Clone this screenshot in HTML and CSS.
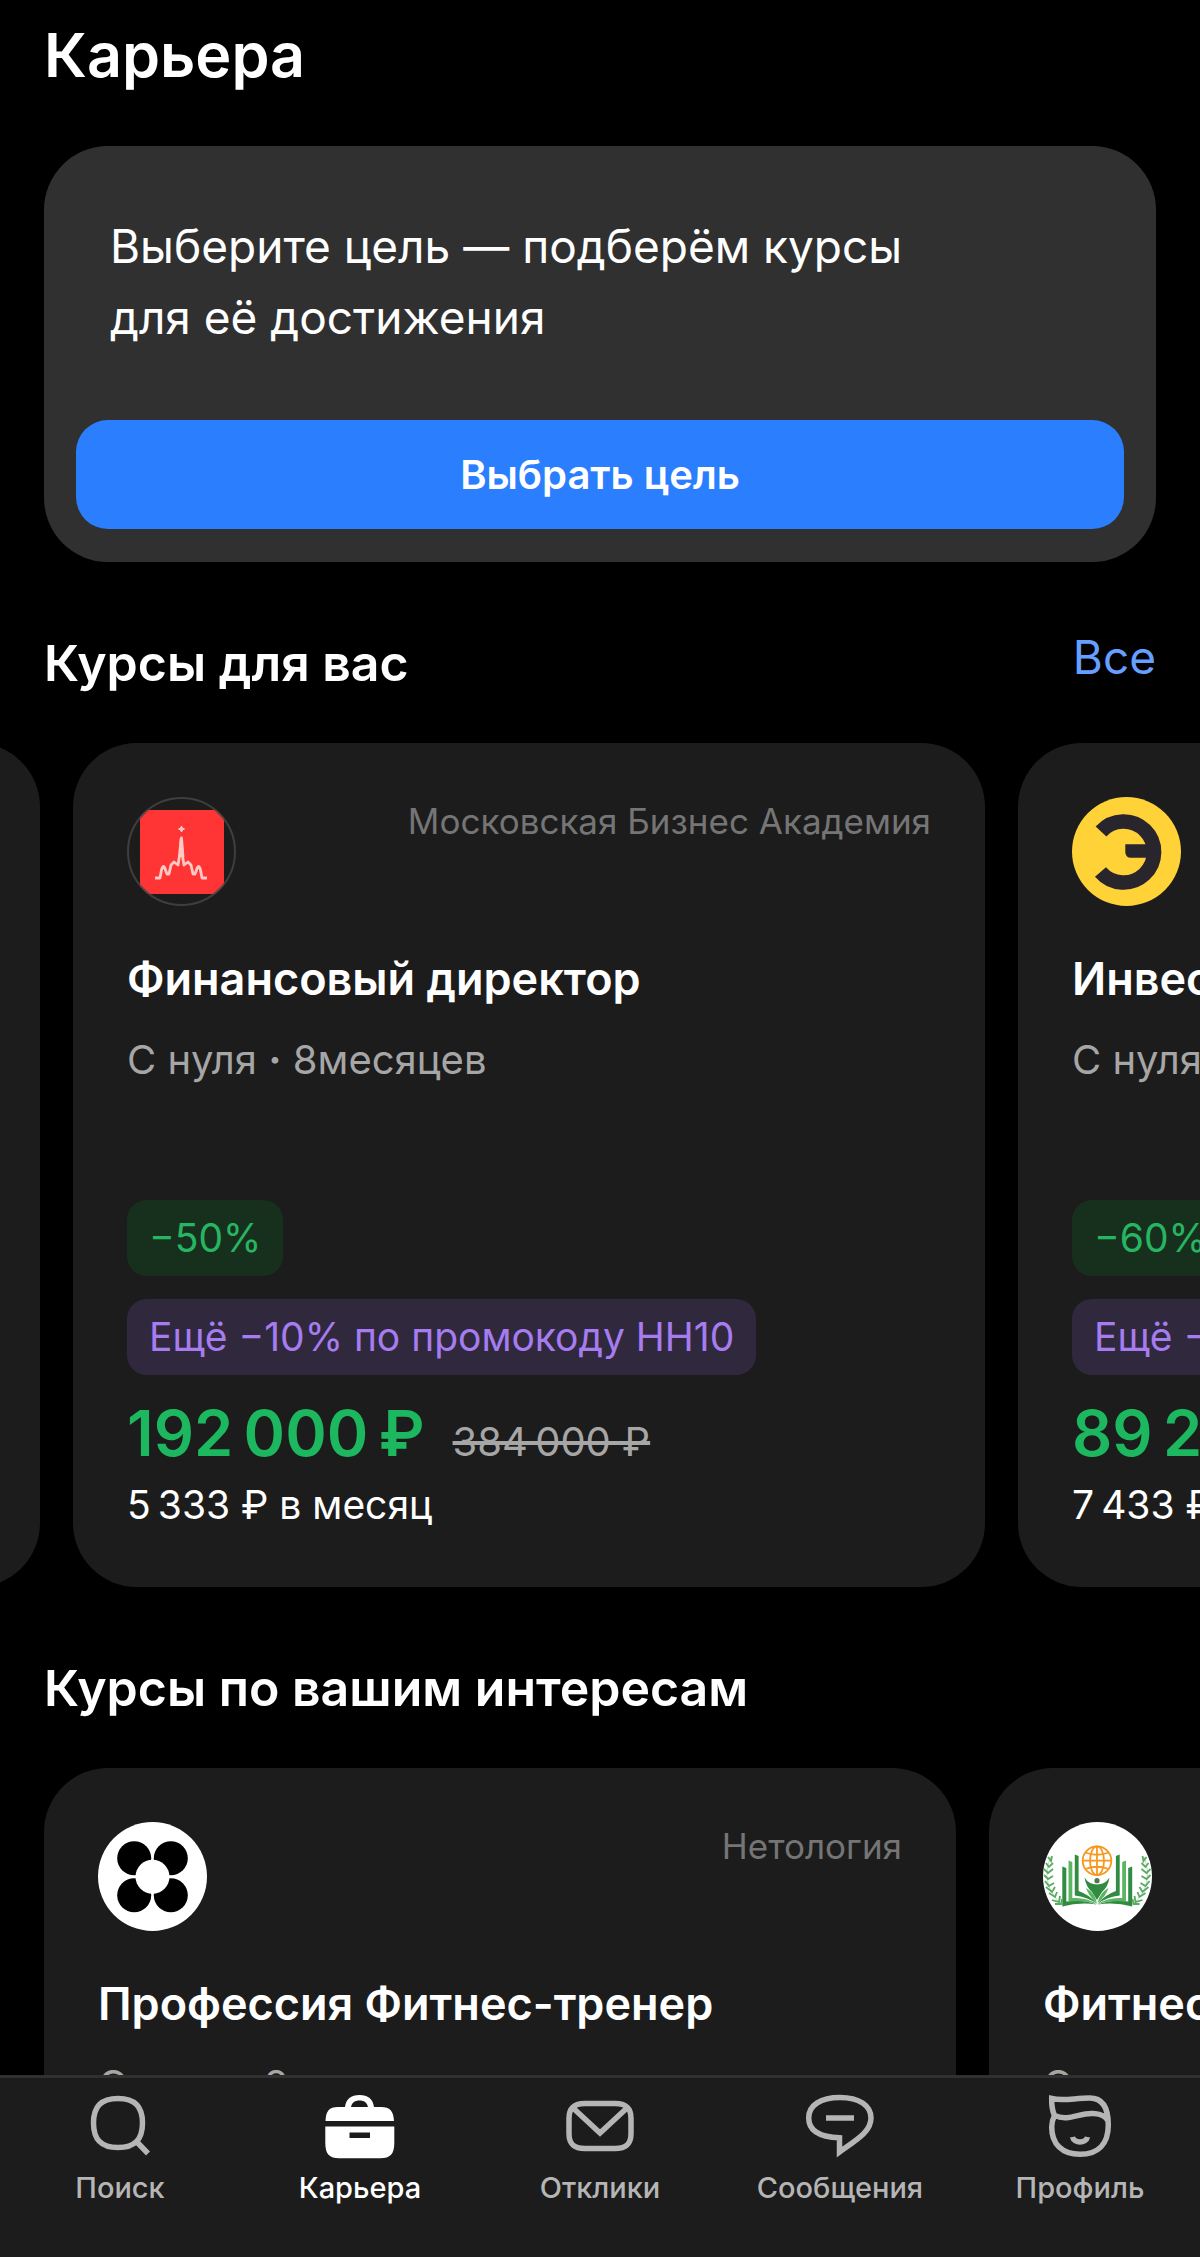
FILE: index.html
```html
<!DOCTYPE html>
<html lang="ru">

<head>
  <meta charset="UTF-8">
  <meta name="viewport" content="width=device-width, initial-scale=1.0">
  <title>Карьера</title>
  <link rel="stylesheet" href="styles.css">
</head>

<body>
  <main class="content">
    <h1 class="page-title">Карьера</h1>

    <section class="goal">
      <p class="goal-text">Выберите цель — подберём курсы<br>для её достижения</p>
      <button class="goal-button" type="button">Выбрать цель</button>
    </section>

    <section>
      <div class="section-head">
        <h2>Курсы для вас</h2>
        <a class="all-link" href="#">Все</a>
      </div>
      <div class="carousel carousel-scrolled">
        <div class="course"></div>
        <article class="course">
          <div class="course-top">
            <svg class="logo" viewBox="0 0 109 109">
              <clipPath id="round"><circle cx="54.5" cy="54.5" r="54" /></clipPath>
              <rect x="13" y="13" width="84" height="84" fill="#ff3535" clip-path="url(#round)" />
              <circle cx="54.5" cy="54.5" r="53.5" fill="none" stroke="#474747" stroke-opacity=".8" stroke-width="2" />
              <g fill="none" stroke="#ffc9c4" stroke-width="2.8" stroke-linejoin="round">
                <path d="M28 81h5l1.500-8q2-7 4 0l1.500 4h2l2-9 3-3 4 3 1.500-9 1.500-17 1.500 17 1.500 9 4-3 3 3 2 9h2l1.500-4q2-7 4 0l1.500 8h5" />
                <path d="M53 60l1.500-19 1.500 19" />
              </g>
              <path d="M54.500 29l1 2 2 1-2 1-1 2-1-2-2-1 2-1z" fill="#ffc9c4" stroke="#ffc9c4" />
            </svg>
            <span class="provider">Московская Бизнес Академия</span>
          </div>
          <h3 class="course-title">Финансовый директор</h3>
          <p class="course-meta">С нуля <b>·</b> 8месяцев</p>
          <div class="offer">
            <span class="badge badge-green">−50%</span>
            <span class="badge badge-purple">Ещё −10% по промокоду HH10</span>
            <div class="prices">
              <span class="price">192&thinsp;000&thinsp;₽</span>
              <s class="old-price">384&thinsp;000&nbsp;₽</s>
            </div>
            <p class="monthly">5&thinsp;333&nbsp;₽ в месяц</p>
          </div>
        </article>
        <article class="course">
          <div class="course-top">
            <svg class="logo" viewBox="0 0 109 109">
              <circle cx="54.5" cy="54.5" r="54.5" fill="#ffd238" />
              <path d="M29 34.500a30.500 30.500 0 1 1-.500 40.500" fill="none" stroke="#29252d" stroke-width="14.600" />
              <path d="M53.300 47.300H76v13.400H59q-5.700 0-5.700-6z" fill="#29252d" />
            </svg>
          </div>
          <h3 class="course-title">Инвестиционный аналитик</h3>
          <p class="course-meta">С нуля <b>·</b> 12 месяцев</p>
          <div class="offer">
            <span class="badge badge-green">−60%</span>
            <span class="badge badge-purple">Ещё −10% по промокоду HH10</span>
            <div class="prices">
              <span class="price">89&thinsp;200&thinsp;₽</span>
            </div>
            <p class="monthly">7&thinsp;433&nbsp;₽ в месяц</p>
          </div>
        </article>
      </div>
    </section>

    <section>
      <div class="section-head">
        <h2>Курсы по вашим интересам</h2>
      </div>
      <div class="carousel">
        <article class="course">
          <div class="course-top">
            <svg class="logo" viewBox="0 0 109 109">
              <circle cx="54.5" cy="54.5" r="54.5" fill="#fff" />
              <circle cx="36.2" cy="36.2" r="17" />
              <circle cx="72.8" cy="36.2" r="17" />
              <circle cx="36.2" cy="73.2" r="17" />
              <circle cx="72.8" cy="73.2" r="17" />
              <circle cx="54.5" cy="54.7" r="17" fill="#fff" />
            </svg>
            <span class="provider">Нетология</span>
          </div>
          <h3 class="course-title">Профессия Фитнес-тренер</h3>
          <p class="course-meta">С нуля <b>·</b> 8 месяцев</p>
        </article>
        <article class="course">
          <div class="course-top">
            <svg class="logo" viewBox="0 0 109 109">
              <circle cx="54.5" cy="54.5" r="54.5" fill="#fff" />
              <g fill="none" stroke="#f7981f" stroke-width="1.8">
                <circle cx="54" cy="38.700" r="14.300" />
                <ellipse cx="54" cy="38.700" rx="7" ry="14.300" />
                <path d="M54 24.400v28.600M39.700 38.700h28.600M42.500 30.500q11.500 4.500 23 0M42.500 47q11.500-4.500 23 0" />
              </g>
              <g id="half">
                <path d="M19.300 44.500l4 1.500v33.500q16.700-2.500 30.700 3-18-2.500-34.700 2z" fill="#318c42" />
                <path d="M25.500 38.500l3.800 1.500v36q13.700-1 24.700 6-14-4.500-28.500-2.500z" fill="#5cb562" />
                <path d="M31.800 32.500l3.800 1.500v35q11.400 4 18.400 13-10-7.500-22.200-8.500z" fill="#318c42" />
                <path d="M43 66q9 5 11 15-8-6-11-15z" fill="#5cb562" />
                <path d="M7.500 35Q-3 62 18 82" fill="none" stroke="#a8d3ab" stroke-width=".8" />
                <path d="M5 35l3 4 1-5M3 41l3 4 4-4M1 47l4 4 5-4M1 53l4 4 5-3M2 59l4 5 5-3M3 65l6 5 3-5M6 71l6 4 2-5M9 78l7 2 1-6M12 82l6 0 1-5" fill="none" stroke="#58ab60" stroke-width="1.800" />
              </g>
              <use href="#half" transform="translate(108.500 0) scale(-1 1)" />
              <circle cx="54" cy="58.700" r="2.600" fill="#4c7a4c" />
              <path d="M41.500 55.500q4.500 7 12.500 7t12.500-7q-1.500 9.500-7.500 14.500l-5 8-5-8q-6-5-7.500-14.500z" fill="#318c42" />
            </svg>
          </div>
          <h3 class="course-title">Фитнес-тренер</h3>
          <p class="course-meta">С нуля</p>
        </article>
      </div>
    </section>
  </main>

  <nav class="tabbar">
    <a class="tab" href="#">
      <svg class="tab-icon" viewBox="0 0 72 72">
        <path d="M34 8.500c17 0 24.500 8 24.500 24.500S51 57.500 34 57.500 9.500 49.500 9.500 33 17 8.500 34 8.500zM51 50l13 13.500" />
      </svg>
      <span>Поиск</span>
    </a>
    <a class="tab tab-active" href="#">
      <svg class="tab-icon" viewBox="0 0 72 72">
        <path class="solid" fill-rule="evenodd" d="M21 17C22 9 27 5 35.500 5S49 9 50 17h7c9 0 12.500 4 13 14H1.500C2 21 5 17 14 17zM27 17h17c-1-4.500-4-6.500-8.500-6.500S28 12.500 27 17z" />
        <path class="solid" fill-rule="evenodd" d="M1.300 36.500h69V53c0 11-4 15.300-14 15.300h-41C5.300 68.300 1.300 64 1.300 53zM25.500 42.500V48H46v-5.500z" />
      </svg>
      <span>Карьера</span>
    </a>
    <a class="tab" href="#">
      <svg class="tab-icon" viewBox="0 0 72 72">
        <path d="M21 13.500h30c12 0 16 5 16 15v15c0 10-4 15-16 15H21c-12 0-16-5-16-15v-15c0-10 4-15 16-15zM8.500 17.500L36 43l27.500-25.500" />
      </svg>
      <span>Отклики</span>
    </a>
    <a class="tab" href="#">
      <svg class="tab-icon" viewBox="0 0 72 72">
        <path d="M36 7.500c19 0 31 8 31 20.500 0 14-15 22-31.500 34V47.800C15 47 4.700 40 4.700 28 4.700 15 17 7.500 36 7.500zM22 28h28" />
      </svg>
      <span>Сообщения</span>
    </a>
    <a class="tab" href="#">
      <svg class="tab-icon" viewBox="0 0 72 72">
        <path d="M10.500 25.500C8 20 7.500 15 7.700 8.500c11 3 23-.500 38-.500C58 8 64.300 17 64.300 35 64.300 54 54 64.300 36 64.300S7.700 54 7.700 37c0-5 1-8 2.800-11.500C25 32 36 22 50 23.500c7 .5 12 3 14 7.500" />
        <path d="M28.500 47c1.500 6.500 13.500 6.500 15 0" />
      </svg>
      <span>Профиль</span>
    </a>
  </nav>
</body>

</html>
```
FILE: styles.css
```css
* {
  box-sizing: border-box;
}

body {
  font-family: Inter, "Liberation Sans", sans-serif;
  background-color: #000;
  color: #fff;
  display: flex;
  flex-direction: column;
  height: 100vh;
  margin: 0;
}

h1,
h2,
h3,
p {
  margin: 0;
}

a {
  text-decoration: none;
}

.content {
  flex: 1;
  min-height: 0;
  overflow: hidden;
}

.page-title {
  padding: 17px 44px 0;
  font-size: 61px;
  line-height: 76px;
  font-weight: 600;
}

/* goal banner */
.goal {
  margin: 53px 44px 0;
  padding: 65px 32px 33px;
  border-radius: 64px;
  background-color: #303030;
}

.goal-text {
  padding: 0 34px;
  font-size: 46px;
  line-height: 71px;
}

.goal-button {
  display: block;
  width: 100%;
  height: 109px;
  margin-top: 67px;
  border: none;
  border-radius: 32px;
  background-color: #2b7fff;
  color: #fff;
  font-family: inherit;
  font-size: 40px;
  font-weight: 600;
  cursor: pointer;
}

/* course lists */
.section-head {
  display: flex;
  justify-content: space-between;
  align-items: flex-start;
  margin: 69px 44px 48px;
}

.section-head h2 {
  font-size: 50px;
  line-height: 64px;
  font-weight: 600;
}

.all-link {
  color: #659fff;
  font-size: 46px;
  line-height: 52px;
}

.carousel {
  display: flex;
  gap: 33px;
  padding-left: 44px;
  overflow: hidden;
}

/* one card already swiped away, its edge stays visible */
.carousel-scrolled {
  padding-left: 0;
}

.carousel-scrolled .course:first-child {
  margin-left: calc(40px - 76vw);
}

.course {
  flex: none;
  display: flex;
  flex-direction: column;
  width: 76vw;
  min-height: 844px;
  padding: 54px;
  border-radius: 64px;
  background-color: #1c1c1c;
  white-space: nowrap;
}

.course-top {
  display: flex;
  justify-content: space-between;
  align-items: flex-start;
}

.logo {
  width: 109px;
  height: 109px;
}

.provider {
  color: #757575;
  font-size: 35px;
  line-height: 48px;
}

.course-title {
  margin-top: 45px;
  font-size: 45px;
  line-height: 56px;
  font-weight: 600;
}

.course-meta {
  margin-top: 29px;
  color: #a6a6a6;
  font-size: 40px;
  line-height: 48px;
}

.offer {
  display: flex;
  flex-direction: column;
  align-items: flex-start;
  margin-top: auto;
}

.badge {
  padding: 0 22px;
  border-radius: 20px;
  font-size: 39px;
  line-height: 76px;
}

.badge-green {
  background-color: #17301e;
  color: #27b562;
}

.badge-purple {
  margin-top: 23px;
  background-color: #30293d;
  color: #a67cf0;
}

.prices {
  display: flex;
  align-items: baseline;
  gap: 28px;
  margin-top: 20px;
}

.price {
  color: #1cb75f;
  font-size: 63px;
  line-height: 76px;
  font-weight: 600;
}

.old-price {
  color: #a6a6a6;
  font-size: 40px;
}

.monthly {
  margin-top: 6px;
  font-size: 39px;
  line-height: 56px;
}

/* bottom navigation */
.tabbar {
  display: flex;
  padding: 12px 0 51px;
  border-top: 3px solid #303030;
  background-color: #1c1c1c;
}

.tab {
  flex: 1;
  display: flex;
  flex-direction: column;
  align-items: center;
  gap: 8px;
  color: #b5b5b5;
  font-size: 29px;
  line-height: 36px;
  font-weight: 500;
}

.tab-active {
  color: #fff;
}

.tab-icon {
  width: 72px;
  height: 72px;
  fill: none;
  stroke: currentColor;
  stroke-width: 5.5;
}

.tab-icon .solid {
  fill: currentColor;
  stroke: none;
}
```
